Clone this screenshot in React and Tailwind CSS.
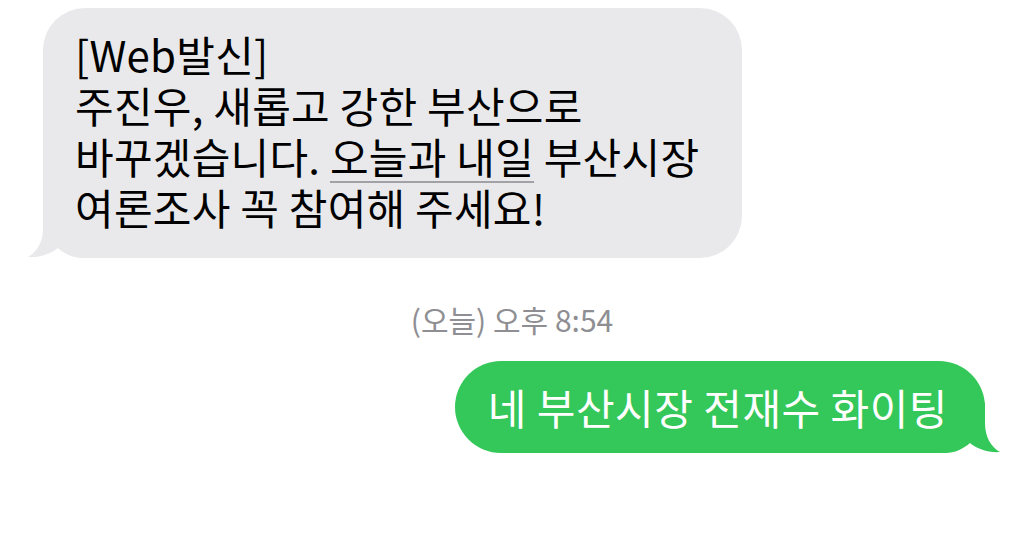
const FONT = "font-['Noto_Sans_CJK_KR','Noto_Sans',sans-serif]";

function Tail({ color, className }) {
  return (
    <svg
      className={className}
      width="60"
      height="50"
      viewBox="0 0 60 50"
      aria-hidden="true"
    >
      <path
        d="M16 0 L16 20 C16 34 10 44 1 49 C12 50 24 46 31 40 C38 46 46 50 56 50 L60 50 L60 0 Z"
        fill={color}
      />
    </svg>
  );
}

export default function App() {
  return (
    <div className={`w-full h-[548px] bg-white flex flex-col overflow-hidden font-normal ${FONT}`}>
      {/* received */}
      <div className="relative ml-[43px] mt-[8px] w-[699px] rounded-[42px] bg-[#e9e9eb] pl-[32px] pr-4 pt-[20px] pb-[26px] text-[42px] leading-[51px] tracking-[0.25px] text-black">
        <Tail color="#e9e9eb" className="absolute left-[-16px] bottom-0" />
        <p className="relative">
          [Web발신]
          <br />
          주진우, 새롭고 강한 부산으로
          <br />
          바꾸겠습니다.{" "}
          <span className="underline decoration-[#a1a1a6] decoration-[1.5px] underline-offset-[7px]">
            오늘과 내일
          </span>{" "}
          부산시장
          <br />
          여론조사 꼭 참여해 주세요!
        </p>
      </div>

      {/* timestamp */}
      <div className="mt-[46px] text-center text-[30px] leading-[30px] text-[#8e8e93]">
        (오늘) 오후 8:54
      </div>

      {/* sent */}
      <div className="relative self-end mr-[39px] mt-[27px] rounded-[46px] bg-[#34c759] pl-[33px] pr-[37px] py-[20px] text-[42px] leading-[52px] tracking-[0.5px] text-white">
        <Tail color="#34c759" className="absolute right-[-16px] bottom-0 -scale-x-100" />
        <p className="relative">네 부산시장 전재수 화이팅</p>
      </div>
    </div>
  );
}
